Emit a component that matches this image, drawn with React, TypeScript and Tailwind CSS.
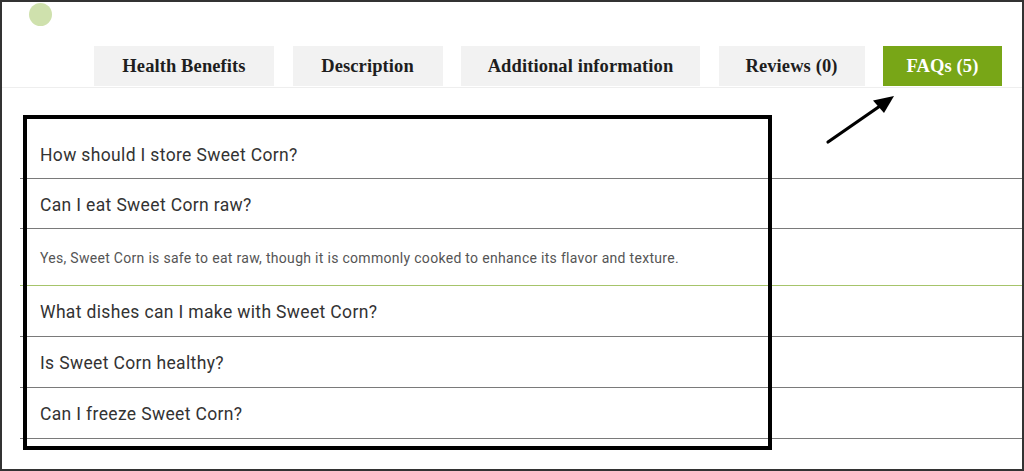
import React from "react";

const tabs = [
  { label: "Health Benefits", w: "w-[180px]", active: false },
  { label: "Description", w: "w-[150px]", active: false },
  { label: "Additional information", w: "w-[239px]", active: false },
  { label: "Reviews (0)", w: "w-[146px]", active: false },
  { label: "FAQs (5)", w: "w-[119px]", active: true },
];

function Question({ text, h }: { text: string; h: string }) {
  return (
    <div
      className={`${h} flex items-center pl-[20px] pt-[3px] border-b border-[#7a7a7a] text-[17.5px] tracking-[0.35px] text-[#333] font-['Roboto',sans-serif]`}
    >
      {text}
    </div>
  );
}

export default function App() {
  return (
    <div className="relative w-[1024px] h-[471px] bg-white border-2 border-[#333] overflow-hidden">
      <div className="pt-[1px] pl-[27px]">
        <div className="w-[23px] h-[23px] rounded-full bg-[#cfe1ad]" />
      </div>
      <div className="mt-[20px] pl-[92px] pb-[1px] border-b border-[#eeeeee] flex gap-[18.5px]">
        {tabs.map((t) => (
          <div
            key={t.label}
            className={`${t.w} h-[40px] pt-[2px] flex items-center justify-center font-['Liberation_Serif',serif] font-bold text-[18.5px] tracking-[0.1px] ${
              t.active ? "bg-[#78a617] text-white" : "bg-[#f2f2f2] text-[#1e1e1e]"
            }`}
          >
            {t.label}
          </div>
        ))}
      </div>
      <div className="ml-[18px] mt-[41px]">
        <Question text="How should I store Sweet Corn?" h="h-[50px]" />
        <Question text="Can I eat Sweet Corn raw?" h="h-[50px]" />
        <div className="h-[57px] flex items-center pl-[20px] pt-[2px] border-b border-[#a6c46a] text-[14px] tracking-[0.3px] text-[#555] font-['Roboto',sans-serif]">
          Yes, Sweet Corn is safe to eat raw, though it is commonly cooked to enhance its flavor and texture.
        </div>
        <Question text="What dishes can I make with Sweet Corn?" h="h-[51px]" />
        <Question text="Is Sweet Corn healthy?" h="h-[51px]" />
        <Question text="Can I freeze Sweet Corn?" h="h-[51px]" />
      </div>
      <div className="absolute left-[21px] top-[113px] w-[749px] h-[335px] border-4 border-black pointer-events-none" />
      <svg className="absolute left-[818px] top-[88px]" width="80" height="60" viewBox="818 88 80 60">
        <line x1="826" y1="140" x2="878" y2="104" stroke="black" strokeWidth="3.2" strokeLinecap="round" />
        <polygon points="892,94 871,98.5 882,111" fill="black" />
      </svg>
    </div>
  );
}
